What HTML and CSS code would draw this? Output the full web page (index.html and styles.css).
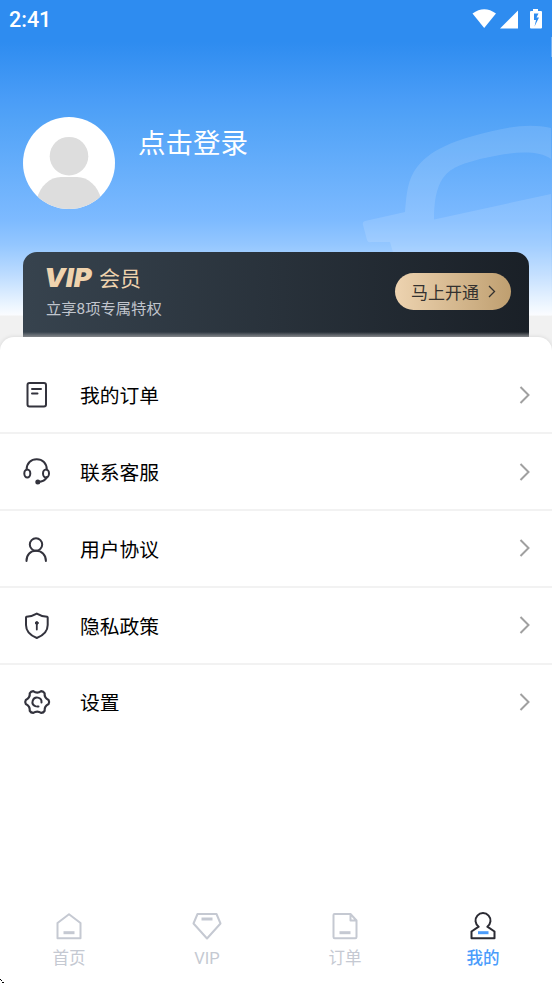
FILE: index.html
```html
<!DOCTYPE html>
<html lang="zh-CN">
<head>
<meta charset="utf-8">
<title>我的</title>
<link rel="stylesheet" href="styles.css">
</head>
<body>
<div class="app">
  <header class="hero">
    <svg class="hero-art" viewBox="0 0 552 316" aria-hidden="true">
      <path fill="#fff" fill-opacity=".13" d="M551 128C526 122 499 129 473 136C449 143 437 149 427 157C408 172 407 189 405 212L365 221Q362 222 363 225L367 240Q368 243 371 242L390 242L394 256V316H551V194L434 219.500C434 203 436 188 443 178C451 166 467 163 480 159C505 153 536 148 551 159Z"/>
      <path fill="#fff" fill-opacity=".3" d="M551 37h1v20h-1z"/>
    </svg>
    <div class="statusbar">
      <span class="clock">2:41</span>
      <svg class="status-icons" width="72" height="22" viewBox="0 0 72 22" fill="#fff" aria-hidden="true">
        <path d="M0.500 5.500Q12.200-3.200 24 5.500L12.200 20Z"/>
        <path d="M46 2.500V20.500H28Z"/>
        <path fill-rule="evenodd" d="M61 1h5v2h3q1 0 1 1v15.500q0 1-1 1H59q-1 0-1-1V4q0-1 1-1h2ZM62 5.500v6.500h2l-1.500 6.500 4.500-9h-2.500l2-4Z"/>
      </svg>
    </div>
    <div class="profile">
      <svg class="avatar" width="92" height="92" viewBox="0 0 92 92" aria-hidden="true">
        <defs><clipPath id="avatar-clip"><circle cx="46" cy="46" r="46"/></clipPath></defs>
        <g clip-path="url(#avatar-clip)">
          <path fill="#fff" d="M0 0h92v92H0z"/>
          <circle cx="46" cy="39.200" r="19.300" fill="#ddd"/>
          <path fill="#ddd" d="M14 92V82C17 69 27 60 38 60H54C65 60 75 69 78 82V92Z"/>
        </g>
      </svg>
      <span class="login">点击登录</span>
    </div>
    <section class="vip-card">
      <div>
        <div class="vip-title"><span class="vip-mark">VIP</span><span class="vip-word">会员</span></div>
        <div class="vip-note">立享8项专属特权</div>
      </div>
      <div class="vip-button">
        <span>马上开通</span>
        <svg width="8" height="13" viewBox="0 0 8 13" fill="none" stroke="#33312f" stroke-width="1.300"><path d="M1 1l5.500 5.500L1 12"/></svg>
      </div>
    </section>
  </header>

  <main class="menu">
    <div class="row">
      <svg class="icon" viewBox="0 0 28 28"><rect x="4.500" y="2" width="18.500" height="23.500" rx="2"/><path d="M9 8h9M9 12.500h5.500"/></svg>
      <span class="label">我的订单</span>
      <svg class="chevron" viewBox="0 0 12 18"><path d="M1.500 1l8 8-8 8"/></svg>
    </div>
    <div class="row">
      <svg class="icon" viewBox="0 0 28 28"><path d="M3.600 11.500C3.600 5 8 1.200 13.700 1.200S23.800 5 23.800 11.500M24 19C22.500 22 19.500 23.700 15 24"/><ellipse cx="4.300" cy="15.500" rx="3" ry="4"/><ellipse cx="23" cy="15.500" rx="3" ry="4"/><circle cx="14.800" cy="24" r="1.500" fill="#33333d"/></svg>
      <span class="label">联系客服</span>
      <svg class="chevron" viewBox="0 0 12 18"><path d="M1.500 1l8 8-8 8"/></svg>
    </div>
    <div class="row">
      <svg class="icon" viewBox="0 0 28 28"><circle cx="13" cy="9.500" r="6.200"/><path d="M3.500 26C3.500 19.500 7.500 15.800 13 15.800S22.900 19.500 22.900 26"/></svg>
      <span class="label">用户协议</span>
      <svg class="chevron" viewBox="0 0 12 18"><path d="M1.500 1l8 8-8 8"/></svg>
    </div>
    <div class="row">
      <svg class="icon" viewBox="0 0 28 28"><path d="M13.800 1.600C10.500 3.600 7 4.500 3.500 4.800Q3 5 3 5.600V13C3 19.500 7.500 23.500 13.800 26C20.200 23.500 24.700 19.500 24.700 13V5.600Q24.700 5 24.100 4.800C20.500 4.500 17 3.600 13.800 1.600Z"/><circle cx="13.800" cy="11" r="1.400" fill="#33333d" stroke-width="1"/><path d="M13.800 11v6.500" stroke-width="1.800"/></svg>
      <span class="label">隐私政策</span>
      <svg class="chevron" viewBox="0 0 12 18"><path d="M1.500 1l8 8-8 8"/></svg>
    </div>
    <div class="row">
      <svg class="icon" viewBox="0 0 28 28"><path stroke-width="2.300" transform="translate(.7 1) scale(.95)" d="M10 2.200Q14.200 5.200 18.400 2.200Q20.800 2.300 22 4.400Q21.600 9.400 26.200 11.600Q27.400 13.700 26.200 15.800Q21.600 18 22 23Q20.800 25.100 18.400 25.200Q14.200 22.200 10 25.200Q7.600 25.100 6.400 23Q6.800 18 2.200 15.800Q1 13.700 2.200 11.600Q6.800 9.400 6.400 4.400Q7.600 2.300 10 2.200Z"/><path d="M12.300 18.200A4.500 4.500 0 1 1 18.500 14.500M14 18.500h1.500"/></svg>
      <span class="label">设置</span>
      <svg class="chevron" viewBox="0 0 12 18"><path d="M1.500 1l8 8-8 8"/></svg>
    </div>
  </main>

  <nav class="tabs">
    <div class="tab">
      <svg viewBox="0 0 30 30"><path d="M15 2.200L26.500 11V26.200H3.500V11Z"/><path d="M9.500 20.700H20.500" stroke-width="3"/></svg>
      <span>首页</span>
    </div>
    <div class="tab">
      <svg viewBox="0 0 30 30"><path d="M5.500 2H24.500L28.500 11.500L15 26.500L1.500 11.500Z"/><path d="M9.500 7H20.500" stroke-width="3"/></svg>
      <span>VIP</span>
    </div>
    <div class="tab">
      <svg viewBox="0 0 30 30"><path d="M4.500 2H20.500L26.500 8.500V25Q26.500 26.200 25.300 26.200H4.700Q3.500 26.200 3.500 25V3Q3.500 2 4.500 2ZM20.500 2V8.500H26.500"/><path d="M9.500 20.700H20.500" stroke-width="3"/></svg>
      <span>订单</span>
    </div>
    <div class="tab active">
      <svg viewBox="0 0 30 30"><path d="M10.700 14.700A7.500 7.500 0 1 1 19.300 14.700L26.500 19.500V26.200H3.500V19.500Z"/><path class="dash" d="M10 20.700H20.500" stroke-width="3"/></svg>
      <span>我的</span>
    </div>
    <svg class="corner" width="4" height="4" viewBox="0 0 4 4" aria-hidden="true"><path d="M0 0h1v1H0zM1 1h1v1H1zM2 3h1v1H2zM3 3h1v1H3z"/></svg>
  </nav>
</div>
</body>
</html>
```
FILE: styles.css
```css
* { box-sizing: border-box; }
body {
  margin: 0;
  background: #fff;
  font-family: Roboto, "Noto Sans CJK SC", sans-serif;
  color: #000;
}
.app {
  width: 552px;
  height: 983px;
  display: flex;
  flex-direction: column;
  overflow: hidden;
}
.hero {
  position: relative;
  height: 337px;
  flex: none;
  display: flex;
  flex-direction: column;
  background: linear-gradient(#2e8cf0 0, #2e8cf0 42px, #4a9df7 100px, #52a3f7 120px, #66aefb 168px, #7dbaff 220px, #94c7ff 245px, #bddcff 275px, #edf6ff 306px, #fafcff 315px, #f1f1f1 316px);
}
.hero-art {
  position: absolute;
  inset: 0 auto auto 0;
  width: 552px;
  height: 316px;
}
.statusbar {
  position: relative;
  height: 38px;
  padding: 0 8px 0 9px;
  display: flex;
  align-items: center;
  justify-content: space-between;
  color: #fff;
}
.clock { font-size: 21.500px; font-weight: 500; }
.status-icons { margin-bottom: 1px; }
.profile {
  position: relative;
  height: 214px;
  padding: 79px 23px 0;
  display: flex;
  gap: 23px;
}
.avatar { flex: none; }
.login {
  margin-top: 7px;
  color: #fff;
  font-size: 27.500px;
  line-height: 40px;
}
.vip-card {
  position: relative;
  height: 85px;
  margin: 0 23px;
  padding: 11px 18px 0 23px;
  display: flex;
  justify-content: space-between;
  border-radius: 14px 14px 0 0;
  background: linear-gradient(transparent 80px, #8b8e92 85px), linear-gradient(90deg, #37434e, #1a2027);
}
.vip-title {
  height: 30px;
  display: flex;
  align-items: center;
  color: #efd3ae;
  font-size: 21px;
}
.vip-mark {
  width: 53px;
  font-family: Inter, sans-serif;
  font-size: 26px;
  font-weight: 900;
  font-style: italic;
  line-height: 30px;
  white-space: nowrap;
  transform: translateX(-2px) scaleX(1.050);
  transform-origin: left;
}
.vip-word { margin-top: -2px; }
.vip-note {
  margin-top: 4px;
  color: #c1c5cd;
  font-size: 15.300px;
  line-height: 24px;
}
.vip-button {
  width: 116px;
  height: 37px;
  margin-top: 10px;
  padding: 0 15px 0 16px;
  display: flex;
  align-items: center;
  justify-content: space-between;
  border-radius: 19px;
  background: linear-gradient(90deg, #edd3b0, #bf9f70);
  color: #33312f;
  font-size: 17px;
}
.menu {
  position: relative;
  flex: 1;
  padding-top: 20.600px;
  border-radius: 14px 14px 0 0;
  background: #fff;
  box-shadow: 0 0 4px rgba(0, 0, 0, .12);
}
.menu::before {
  content: "";
  position: absolute;
  z-index: -1;
  inset: -14px 0 auto;
  height: 28px;
  background: #f1f1f1;
}
.row {
  height: 76.750px;
  padding: 0 21px 0 23px;
  display: flex;
  align-items: center;
  border-bottom: 2px solid #f2f2f2;
}
.row:last-child { border-bottom-color: transparent; }
.icon {
  width: 28px;
  height: 28px;
  margin-top: 1px;
  fill: none;
  stroke: #33333d;
  stroke-width: 2;
  stroke-linecap: round;
  stroke-linejoin: round;
}
.label {
  margin: 5px 0 0 29px;
  font-size: 19.800px;
  line-height: 30px;
}
.chevron {
  width: 12px;
  height: 18px;
  margin: 0 0 0 auto;
  fill: none;
  stroke: #a0a0a0;
  stroke-width: 2;
}
.tabs {
  position: relative;
  height: 83px;
  flex: none;
  display: grid;
  grid-template-columns: repeat(4, 1fr);
  background: #fff;
  box-shadow: 0 -6px 0 #fff;
}
.tab {
  padding-top: 12px;
  display: flex;
  flex-direction: column;
  align-items: center;
  color: #c5c9d2;
  font-size: 16.500px;
  line-height: 24px;
}
.tab svg {
  width: 30px;
  height: 30px;
  margin-bottom: 5px;
  fill: none;
  stroke: #c5c9d2;
  stroke-width: 2;
  stroke-linejoin: round;
}
.tab.active { color: #4b9cfb; font-weight: 500; }
.tab.active svg { stroke: #2b2b33; }
.tab.active .dash { stroke: #4b9cfb; }
.corner {
  position: absolute;
  left: 0;
  bottom: 0;
}
```
